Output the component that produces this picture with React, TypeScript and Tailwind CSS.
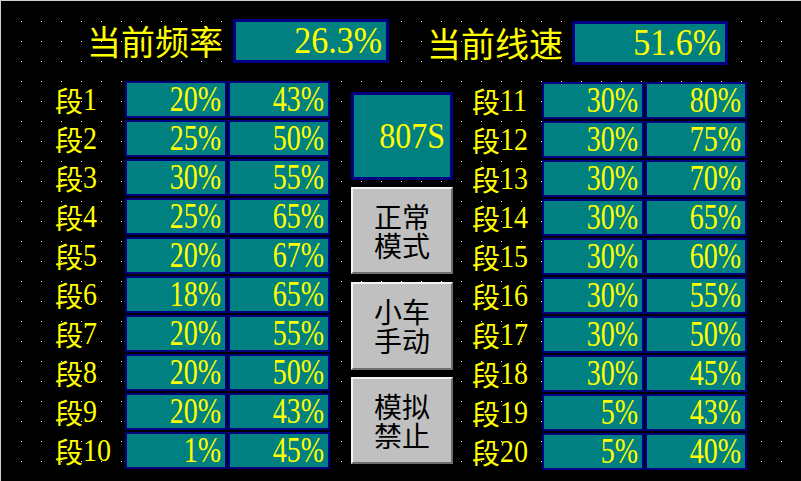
const leftRows: [number, number][] = [
  [20, 43],
  [25, 50],
  [30, 55],
  [25, 65],
  [20, 67],
  [18, 65],
  [20, 55],
  [20, 50],
  [20, 43],
  [1, 45],
];

const rightRows: [number, number][] = [
  [30, 80],
  [30, 75],
  [30, 70],
  [30, 65],
  [30, 60],
  [30, 55],
  [30, 50],
  [30, 45],
  [5, 43],
  [5, 40],
];

function DotGrid() {
  return (
    <svg className="pointer-events-none absolute inset-0" width="801" height="481">
      <defs>
        <pattern id="hmi-dots" x="0" y="0" width="20" height="20" patternUnits="userSpaceOnUse">
          <rect x="0" y="0" width="1" height="1" fill="#ffffff" />
        </pattern>
      </defs>
      <rect x="19" y="19" width="790" height="470" fill="url(#hmi-dots)" />
    </svg>
  );
}

function Value({ text, className = "" }: { text: string; className?: string }) {
  return (
    <div
      className={`flex h-[37px] w-[102px] items-center justify-end border-2 border-[#000080] bg-[#008080] pr-[4px] font-['Liberation_Serif'] text-[28px] leading-none text-[#ffff00] ${className}`}>
      <span className="inline-block scale-y-125">{text}</span>
    </div>
  );
}

function SegmentRow({ no, a, b }: { no: number; a: number; b: number }) {
  return (
    <div className="flex items-center gap-px">
      <div className="flex h-[37px] w-[69px] items-center text-[28px] leading-none text-[#ffff00]">
        <span className="font-['Noto_Sans_CJK_SC']">段</span>
        <span className="inline-block scale-y-110 font-['Liberation_Serif']">{no}</span>
      </div>
      <Value text={`${a}%`} />
      <Value text={`${b}%`} />
    </div>
  );
}

// two-character-wide label, wraps into two lines
function PanelButton({ label, className = "" }: { label: string; className?: string }) {
  return (
    <button
      className={`flex w-[102px] items-center justify-center border-2 border-t-[#f4f4f4] border-l-[#f4f4f4] border-r-[#6e6e6e] border-b-[#6e6e6e] bg-[#c0c0c0] font-['Noto_Sans_CJK_SC'] text-[28px] leading-[29px] text-black ${className}`}>
      <span className="w-[58px] text-center">{label}</span>
    </button>
  );
}

export default function App() {
  return (
    <div className="relative h-[481px] w-[801px] overflow-hidden border-t border-l border-[#cfcfcf] bg-black font-serif">
      <DotGrid />
      <div className="relative flex flex-col">
        {/* header readouts */}
        <div className="flex items-start pt-[18px] pl-[86px]">
          <div className="flex h-[44px] w-[146px] items-center font-['Noto_Sans_CJK_SC'] text-[34px] leading-none text-[#ffff00]">
            当前频率
          </div>
          <div className="flex h-[44px] w-[156px] items-center justify-end border-[3px] border-[#000080] bg-[#008080] pr-[4px] font-['Liberation_Serif'] text-[34px] leading-none text-[#ffff00]">
            <span className="inline-block scale-y-110">26.3%</span>
          </div>
          <div className="mt-[2px] ml-[38px] flex h-[44px] w-[145px] items-center font-['Noto_Sans_CJK_SC'] text-[34px] leading-none text-[#ffff00]">
            当前线速
          </div>
          <div className="mt-[2px] flex h-[44px] w-[156px] items-center justify-end border-[3px] border-[#000080] bg-[#008080] pr-[4px] font-['Liberation_Serif'] text-[34px] leading-none text-[#ffff00]">
            <span className="inline-block scale-y-110">51.6%</span>
          </div>
        </div>

        <div className="mt-[16px] flex items-start pl-[54px]">
          <div className="flex flex-col gap-[2px]">
            {leftRows.map(([a, b], i) => (
              <SegmentRow key={i} no={i + 1} a={a} b={b} />
            ))}
          </div>

          <div className="mt-[11px] ml-[21px] flex w-[102px] flex-col">
            <div className="flex h-[88px] w-[102px] items-center justify-end border-[3px] border-[#000080] bg-[#008080] pr-[5px] font-['Liberation_Serif'] text-[32px] leading-none text-[#ffff00]">
              <span className="inline-block scale-y-110">807S</span>
            </div>
            <PanelButton label="正常模式" className="mt-[7px] h-[87px]" />
            <PanelButton label="小车手动" className="mt-[8px] h-[88px]" />
            <PanelButton label="模拟禁止" className="mt-[7px] h-[87px]" />
          </div>

          <div className="mt-px ml-[19px] flex flex-col gap-[2px]">
            {rightRows.map(([a, b], i) => (
              <SegmentRow key={i} no={i + 11} a={a} b={b} />
            ))}
          </div>
        </div>
      </div>
    </div>
  );
}
